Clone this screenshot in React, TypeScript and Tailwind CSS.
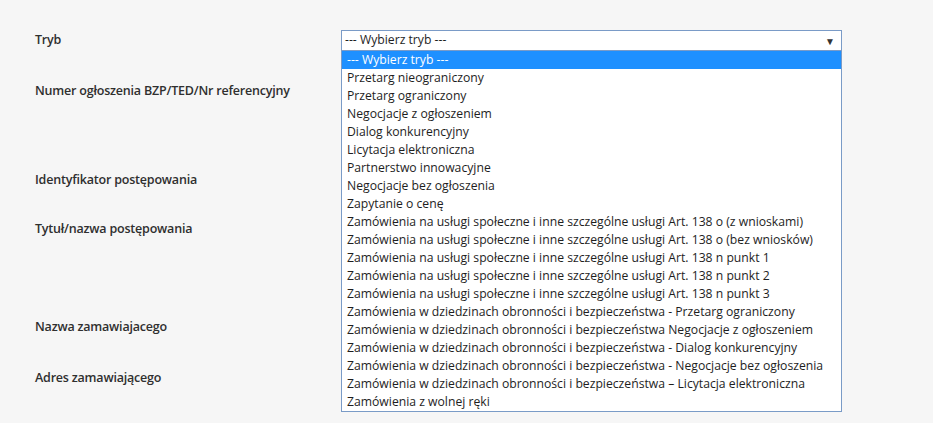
import React from "react";

const options = [
  "--- Wybierz tryb ---",
  "Przetarg nieograniczony",
  "Przetarg ograniczony",
  "Negocjacje z ogłoszeniem",
  "Dialog konkurencyjny",
  "Licytacja elektroniczna",
  "Partnerstwo innowacyjne",
  "Negocjacje bez ogłoszenia",
  "Zapytanie o cenę",
  "Zamówienia na usługi społeczne i inne szczególne usługi Art. 138 o (z wnioskami)",
  "Zamówienia na usługi społeczne i inne szczególne usługi Art. 138 o (bez wniosków)",
  "Zamówienia na usługi społeczne i inne szczególne usługi Art. 138 n punkt 1",
  "Zamówienia na usługi społeczne i inne szczególne usługi Art. 138 n punkt 2",
  "Zamówienia na usługi społeczne i inne szczególne usługi Art. 138 n punkt 3",
  "Zamówienia w dziedzinach obronności i bezpieczeństwa - Przetarg ograniczony",
  "Zamówienia w dziedzinach obronności i bezpieczeństwa Negocjacje z ogłoszeniem",
  "Zamówienia w dziedzinach obronności i bezpieczeństwa - Dialog konkurencyjny",
  "Zamówienia w dziedzinach obronności i bezpieczeństwa - Negocjacje bez ogłoszenia",
  "Zamówienia w dziedzinach obronności i bezpieczeństwa – Licytacja elektroniczna",
  "Zamówienia z wolnej ręki",
];

const rows: { label: string; h: string }[] = [
  { label: "Tryb", h: "h-[51px]" },
  { label: "Numer ogłoszenia BZP/TED/Nr referencyjny", h: "h-[89px]" },
  { label: "Identyfikator postępowania", h: "h-[49px]" },
  { label: "Tytuł/nazwa postępowania", h: "h-[98px]" },
  { label: "Nazwa zamawiajacego", h: "h-[51px]" },
  { label: "Adres zamawiającego", h: "h-[52px]" },
  { label: "Adres e-mail zamawiającego", h: "h-[52px]" },
];

export default function App() {
  return (
    <div
      className="w-[933px] h-[423px] overflow-hidden bg-[#f6f6f6] text-[#333]"
      style={{ fontFamily: '"Open Sans", "Noto Sans", sans-serif' }}
    >
      <div className="flex pt-[30px]">
        <div className="w-[341px] shrink-0 pl-[35px]">
          {rows.map((r) => (
            <div key={r.label} className={r.h}>
              <div className="text-[12.5px] leading-[20px] font-semibold tracking-[-0.2px] text-[#2f2f2f]">
                {r.label}
              </div>
            </div>
          ))}
        </div>
        <div className="relative w-[501px]">
          <div className="h-[21px] border border-[#7a9bc7] bg-white flex items-center justify-between pl-[3px] pr-[6px] text-[12.2px] text-[#1e1e1e]">
            <span>--- Wybierz tryb ---</span>
            <span className="text-[10px] leading-none text-[#333]">▼</span>
          </div>
          <div className="absolute left-0 top-[21px] w-[501px] border border-t-0 border-[#7a9bc7] bg-white">
            {options.map((o, i) => (
              <div
                key={i}
                className={
                  "h-[18px] leading-[18px] pl-[5px] text-[12.2px] whitespace-nowrap " +
                  (i === 0 ? "bg-[#1e90ff] text-white" : "text-[#1e1e1e]")
                }
              >
                {o}
              </div>
            ))}
          </div>
        </div>
      </div>
    </div>
  );
}
